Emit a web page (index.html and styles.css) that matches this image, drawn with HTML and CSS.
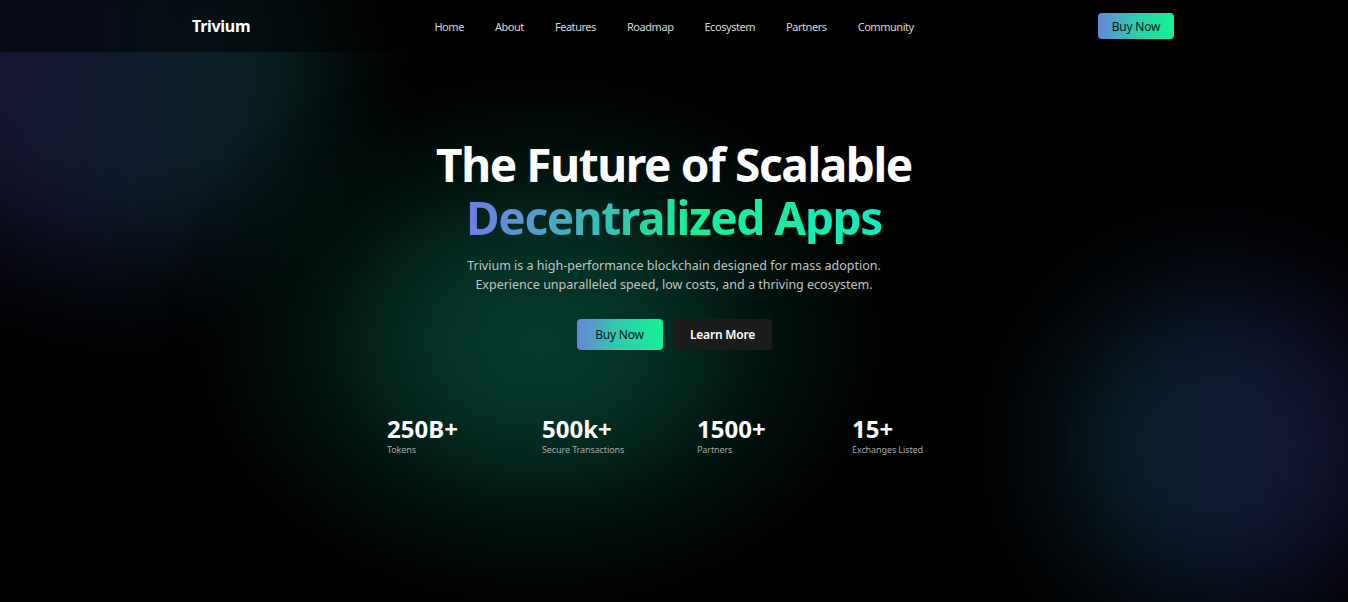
FILE: index.html
```html
<!DOCTYPE html>
<html lang="en">
<head>
<meta charset="utf-8">
<title>Trivium</title>
<link rel="stylesheet" href="styles.css">
</head>
<body>
<div class="page">
  <div class="glow glow-tl"></div>
  <div class="glow glow-center"></div>
  <div class="glow glow-br"></div>

  <header class="nav">
    <div class="nav-inner">
      <a class="logo" href="#">Trivium</a>
      <nav class="links">
        <a href="#">Home</a>
        <a href="#">About</a>
        <a href="#">Features</a>
        <a href="#">Roadmap</a>
        <a href="#">Ecosystem</a>
        <a href="#">Partners</a>
        <a href="#">Community</a>
      </nav>
      <a class="btn btn-grad btn-nav" href="#">Buy Now</a>
    </div>
  </header>

  <main class="hero">
    <h1 class="title"><span class="line">The Future of Scalable</span><span class="line grad-text">Decentralized Apps</span></h1>
    <p class="lead">Trivium is a high-performance blockchain designed for mass adoption.<br>Experience unparalleled speed, low costs, and a thriving ecosystem.</p>
    <div class="actions">
      <a class="btn btn-grad btn-hero" href="#">Buy Now</a>
      <a class="btn btn-dark btn-hero" href="#">Learn More</a>
    </div>
    <div class="stats">
      <div class="stat"><div class="stat-num">250B+</div><div class="stat-label">Tokens</div></div>
      <div class="stat"><div class="stat-num">500k+</div><div class="stat-label">Secure Transactions</div></div>
      <div class="stat"><div class="stat-num">1500+</div><div class="stat-label">Partners</div></div>
      <div class="stat"><div class="stat-num">15+</div><div class="stat-label">Exchanges Listed</div></div>
    </div>
  </main>
</div>
</body>
</html>
```

FILE: styles.css
```css
* { box-sizing: border-box; }
html, body { margin: 0; padding: 0; }
body {
  background: #000;
  color: #fff;
  font-family: "Noto Sans", "Open Sans", "Liberation Sans", sans-serif;
}
a { text-decoration: none; color: inherit; }

.page {
  position: relative;
  min-height: 602px;
  overflow: hidden;
}

.glow {
  position: absolute;
  border-radius: 50%;
  pointer-events: none;
  z-index: 0;
}
.glow-tl {
  left: -100px;
  top: -130px;
  width: 430px;
  height: 400px;
  background: linear-gradient(90deg, #34286e 0%, #202a58 40%, #0f4a3e 100%);
  filter: blur(60px);
  opacity: 0.55;
}
.glow-center {
  left: 190px;
  top: 50px;
  width: 700px;
  height: 560px;
  background: radial-gradient(closest-side at 50% 52%, rgba(5, 60, 45, 1) 0%, rgba(5, 55, 42, 0.85) 35%, rgba(4, 40, 30, 0.45) 65%, rgba(0, 0, 0, 0) 100%);
  filter: blur(20px);
}
.glow-br {
  left: 1060px;
  top: 285px;
  width: 320px;
  height: 320px;
  background: linear-gradient(90deg, #0f4648 0%, #1a3060 50%, #30256a 100%);
  filter: blur(60px);
  opacity: 0.55;
}

.nav {
  position: relative;
  z-index: 2;
  height: 52px;
  background: rgba(0, 0, 0, 0.5);
}
.nav-inner {
  width: 1000px;
  margin: 0 auto;
  height: 100%;
  padding: 0 0 0 18px;
  display: flex;
  align-items: center;
  justify-content: space-between;
}
.logo {
  font-size: 16px;
  font-weight: 700;
  color: #fff;
  letter-spacing: -0.3px;
}
.links {
  display: flex;
  gap: 31px;
}
.links a {
  font-size: 11px;
  color: #d6d6d6;
  letter-spacing: -0.45px;
}

.btn {
  display: inline-flex;
  align-items: center;
  justify-content: center;
  border-radius: 4px;
  font-size: 12px;
}
.btn-grad {
  background: linear-gradient(90deg, #6684d8 0%, #34c7b0 45%, #14f195 100%);
  color: #0b1a14;
}
.btn-nav {
  width: 76px;
  height: 26px;
  letter-spacing: -0.2px;
}
.btn-hero {
  height: 31px;
  letter-spacing: -0.2px;
}
.btn-grad.btn-hero { width: 86px; }
.btn-dark {
  width: 98px;
  background: #1b1d1d;
  color: #fff;
  font-weight: 600;
}

.hero {
  position: relative;
  z-index: 1;
  display: flex;
  flex-direction: column;
  align-items: center;
  padding-top: 86px;
}
.title {
  margin: 0;
  font-size: 46px;
  font-weight: 700;
  line-height: 53px;
  text-align: center;
  letter-spacing: -1.4px;
}
.line { display: block; }
.grad-text {
  background: linear-gradient(90deg, #7b6cf0 0%, #4aa6c8 25%, #14f195 55%, #14e9c6 100%);
  -webkit-background-clip: text;
  background-clip: text;
  color: transparent;
}
.lead {
  margin: 12px 0 0;
  font-size: 12.5px;
  line-height: 19px;
  text-align: center;
  color: #c2c2c2;
}
.actions {
  display: flex;
  gap: 11px;
  margin-top: 25px;
}
.stats {
  display: grid;
  grid-template-columns: repeat(4, 109px);
  column-gap: 46px;
  margin-top: 62px;
  width: 574px;
}
.stat-num {
  font-size: 24px;
  font-weight: 700;
  line-height: 33px;
}
.stat-label {
  font-size: 9px;
  line-height: 11px;
  color: #a8a8a8;
  margin-top: -1px;
  letter-spacing: -0.1px;
  white-space: nowrap;
}
```
